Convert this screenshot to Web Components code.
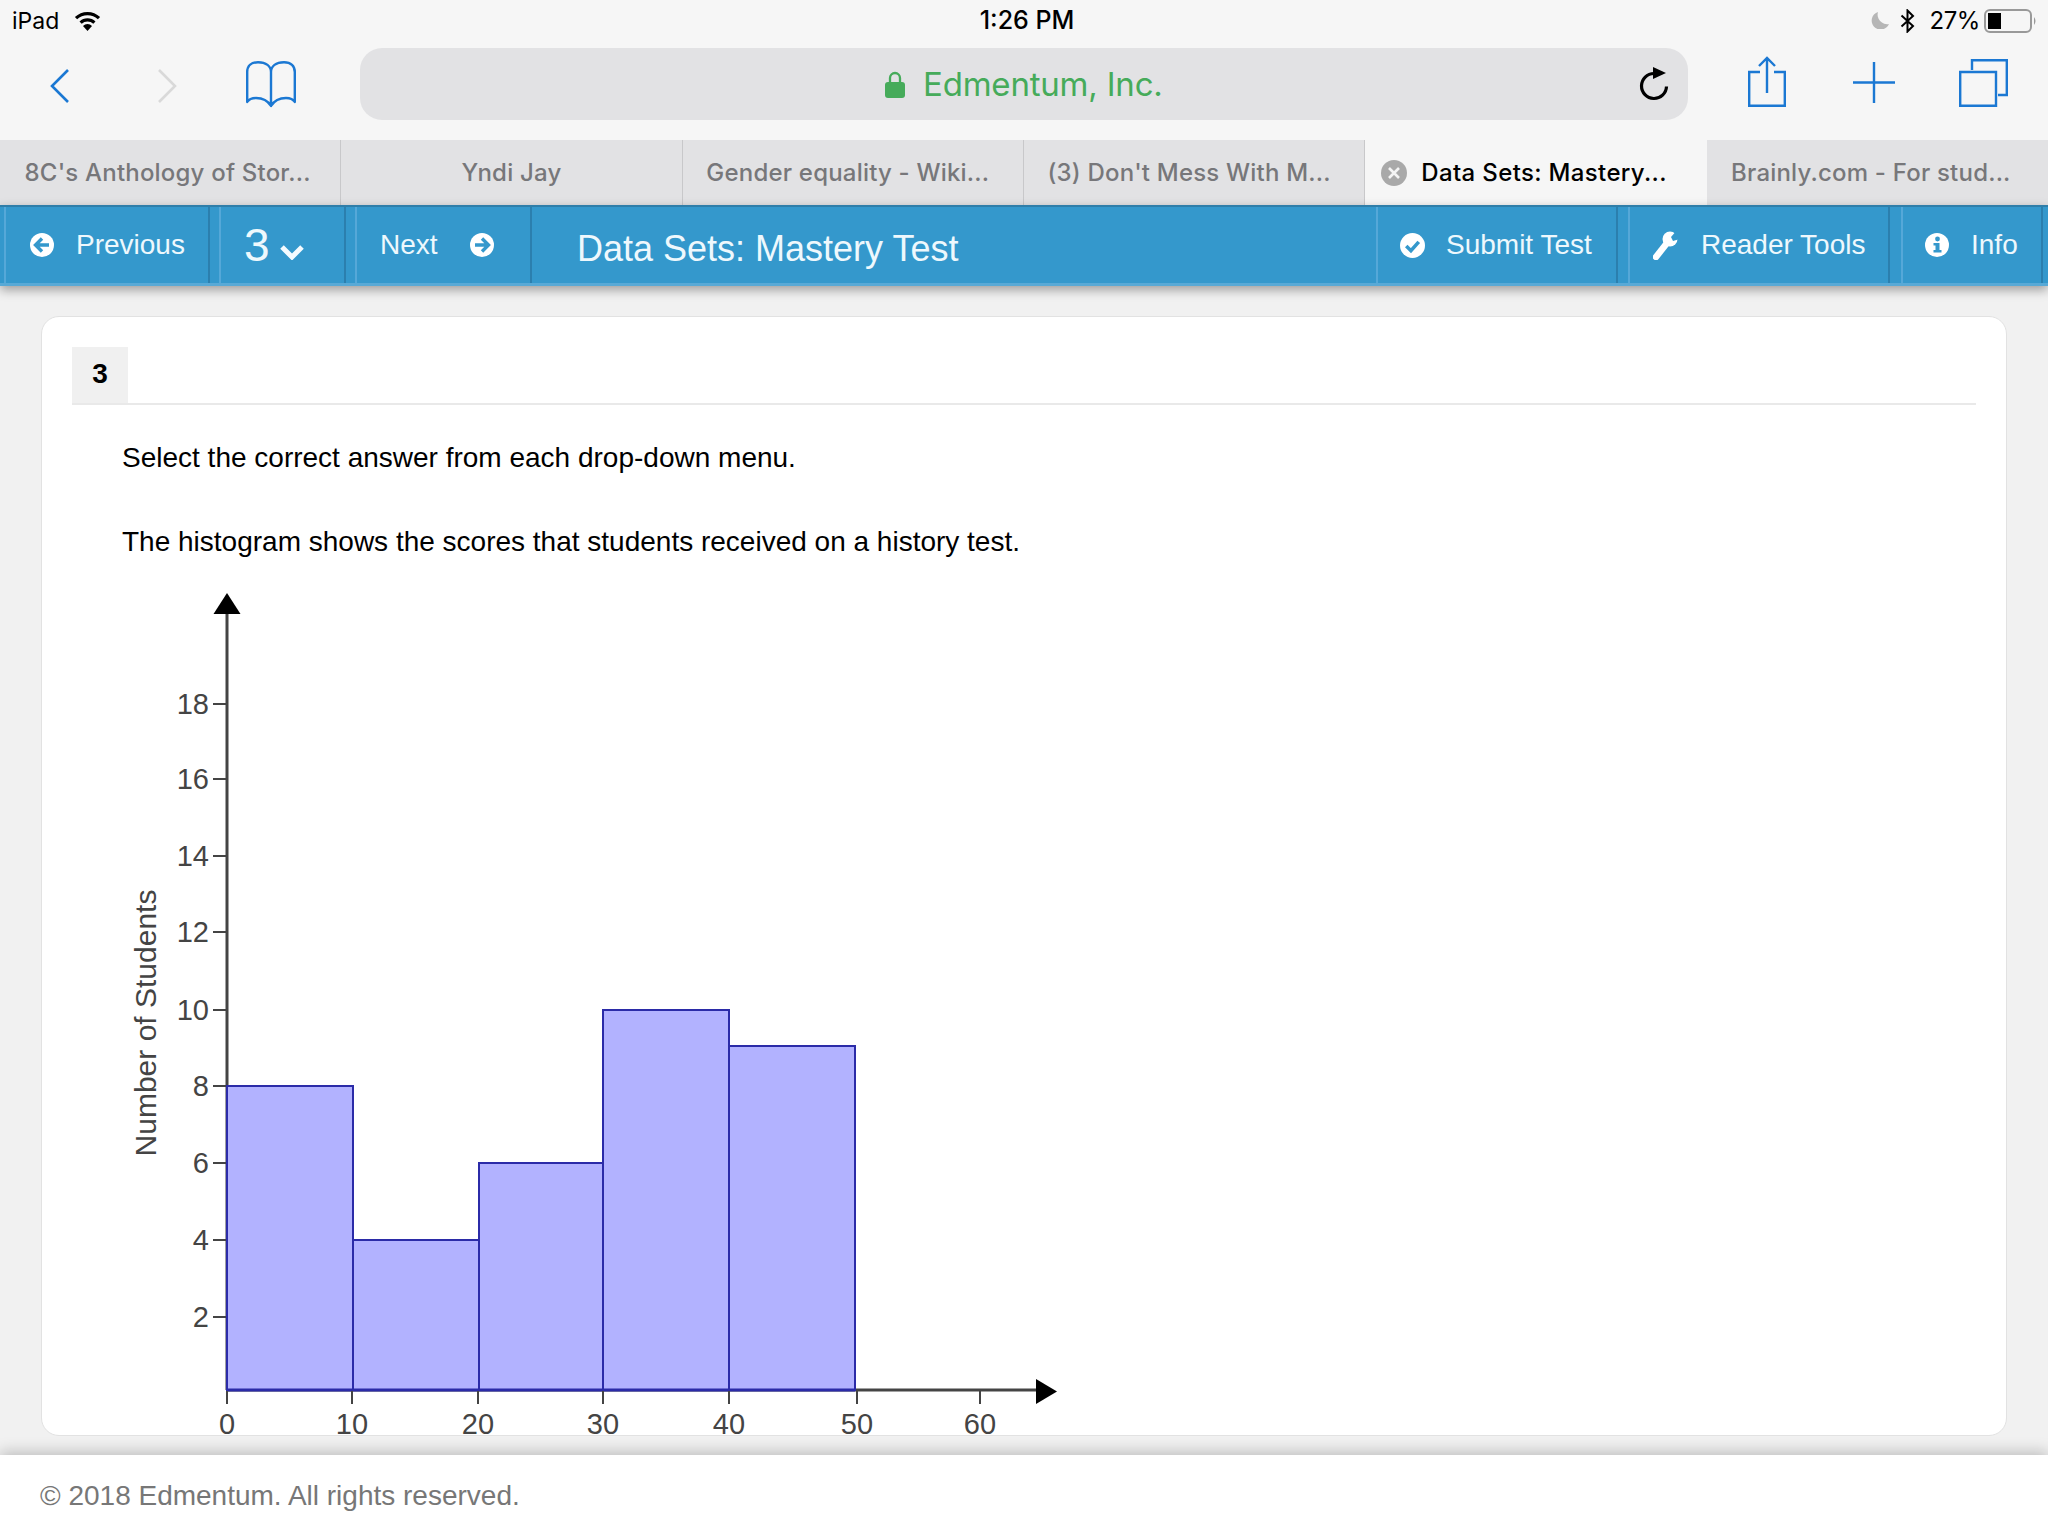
<!DOCTYPE html>
<html lang="en"><head><meta charset="utf-8"><title>Data Sets: Mastery Test</title>
<style>html,body{margin:0;padding:0;background:#f6f6f6}</style></head>
<body>
<quiz-app>
  <status-bar></status-bar>
  <browser-toolbar></browser-toolbar>
  <tab-strip>
    <browser-tab style="padding-right:5px">8C's Anthology of Stor...</browser-tab>
    <browser-tab>Yndi Jay</browser-tab>
    <browser-tab style="padding-right:10px">Gender equality - Wiki...</browser-tab>
    <browser-tab style="padding-right:10px">(3) Don't Mess With M...</browser-tab>
    <browser-tab active>Data Sets: Mastery...</browser-tab>
    <browser-tab style="padding-right:13px">Brainly.com - For stud...</browser-tab>
  </tab-strip>
  <quiz-bar></quiz-bar>
  <question-area>
    <question-card number="3">
      <p slot="body" class="a">Select the correct answer from each drop-down menu.</p>
      <p slot="body" class="b">The histogram shows the scores that students received on a history test.</p>
      <score-histogram slot="body"></score-histogram>
    </question-card>
  </question-area>
  <site-footer>© 2018 Edmentum. All rights reserved.</site-footer>
</quiz-app>
<script>
function def(name, html, init){
  const t=document.createElement('template'); t.innerHTML=html;
  customElements.define(name, class extends HTMLElement{
    constructor(){super();this.attachShadow({mode:'open'}).appendChild(t.content.cloneNode(true));}
    connectedCallback(){ if(init) init(this); }
  });
}
const BLUE='#1b78d3', BAR='#3498cc';
def('quiz-app',`<style>:host{display:flex;flex-direction:column;width:2048px;height:1536px;overflow:hidden;background:#f6f6f6}</style><slot></slot>`);

def('status-bar',`<style>
:host{display:grid;grid-template-columns:1fr auto 1fr;align-items:center;height:48px;box-sizing:border-box;padding:0 10px 7px 12px;font:400 24px Inter,"Liberation Sans",sans-serif;color:#000}
.l,.r{display:flex;align-items:center}.r{justify-content:flex-end}
.t{font-weight:500;font-size:25px;margin:0 0 2px 4px}svg{display:block}
</style>
<div class="l"><span style="font-size:23px">iPad</span>
<svg style="margin-left:15px" width="27" height="20" viewBox="0 0 27 20"><path d="M2 7.2A16.5 16.5 0 0 1 25 7.2M6.6 11.6A10 10 0 0 1 20.4 11.6" fill="none" stroke="#000" stroke-width="3.2"/><path d="M13.5 20L9 15A6.3 6.3 0 0 1 18 15Z"/></svg></div>
<div class="t">1:26 PM</div>
<div class="r">
<svg width="18" height="17" viewBox="0 0 18 17"><path d="M7 0A9 9 0 1 0 18 12A9.5 9.5 0 0 1 7 0Z" fill="#b6b6b6"/></svg>
<svg style="margin-left:11px" width="15" height="24" viewBox="0 0 15 24"><path d="M1.5 6.5L13 17L7.5 22.5V1.5L13 7L1.5 17.5" fill="none" stroke="#000" stroke-width="2"/></svg>
<span style="margin-left:14px;font-size:24px;letter-spacing:-.4px">27%</span>
<svg style="margin-left:4px" width="54" height="24" viewBox="0 0 54 24"><rect x="1" y="1" width="46" height="22" rx="5" fill="none" stroke="#999" stroke-width="2"/><rect x="4" y="4" width="13" height="16" fill="#000"/><path d="M50 8Q53 12 50 16Z" fill="#999"/></svg>
</div>`);

def('browser-toolbar',`<style>
:host{display:flex;height:92px;box-sizing:border-box;padding:0 0 20px 50px;align-items:flex-start;background:#f6f6f6}
svg{display:block;flex:none}
.url{flex:none;width:1328px;height:72px;margin-left:64px;border-radius:22px;background:#e2e2e4;display:flex;align-items:center;position:relative;box-sizing:border-box;padding-left:525px}
.host{margin-left:18px;font:400 33px Inter,"Liberation Sans",sans-serif;color:#46ab5a;letter-spacing:-.2px;line-height:40px}
</style>
<svg style="margin-top:21px" width="19" height="34" viewBox="0 0 19 34"><path d="M18 1L2 17L18 33" fill="none" stroke="${BLUE}" stroke-width="2.6"/></svg>
<svg style="margin:21px 0 0 89px" width="19" height="34" viewBox="0 0 19 34"><path d="M1 1L17 17L1 33" fill="none" stroke="#d9d9d9" stroke-width="2.6"/></svg>
<svg style="margin:13px 0 0 69px" width="50" height="47" viewBox="0 0 50 47"><path d="M25 45C22 40 16 37 10 37C6 37 3 38 1.2 41V11C1.2 5 5 1.2 12 1.2C20 1.2 25 5 25 11ZM25 45C28 40 34 37 40 37C44 37 47 38 48.800 41V11C48.800 5 45 1.2 38 1.2C30 1.2 25 5 25 11" fill="none" stroke="${BLUE}" stroke-width="2.4" stroke-linejoin="round"/></svg>
<div class="url">
<svg width="20" height="27" viewBox="0 0 20 27"><path d="M5 12V7A5 5 0 0 1 15 7V12" fill="none" stroke="#46ab5a" stroke-width="2.3"/><rect y="11" width="20" height="16" rx="3" fill="#46ab5a"/></svg>
<span class="host">Edmentum, Inc.</span>
<svg style="position:absolute;left:1279px;top:19px" width="30" height="34" viewBox="0 0 30 34"><path d="M15 6.500A12.500 12.500 0 1 0 27.500 19.500" fill="none" stroke="#000" stroke-width="3.200"/><path d="M14 0L27 6L14 12Z"/></svg>
</div>
<svg style="margin:8px 0 0 60px" width="38" height="51" viewBox="0 0 38 51"><path d="M12 16H1.200V49.800H36.800V16H26M19 37V2M11 10L19 2L27 10" fill="none" stroke="${BLUE}" stroke-width="2.400"/></svg>
<svg style="margin:14px 0 0 67px" width="42" height="41" viewBox="0 0 42 41"><path d="M0 20.500H42M21 0V41" stroke="${BLUE}" stroke-width="2.400"/></svg>
<svg style="margin:11px 0 0 64px" width="49" height="48" viewBox="0 0 49 48"><path d="M1.200 13H37V46.800H1.200ZM13 11V1.200H47.800V36H39" fill="none" stroke="${BLUE}" stroke-width="2.400"/></svg>`);

def('tab-strip',`<style>:host{display:grid;grid-template-columns:repeat(6,1fr);height:65px;background:#e2e2e4}</style><slot></slot>`);
def('browser-tab',`<style>
:host{min-width:0;box-sizing:border-box;display:flex;align-items:center;justify-content:center;border-right:1px solid #c8c8ca;font:500 24px Inter,"Liberation Sans",sans-serif;color:#77777a;letter-spacing:.2px;white-space:nowrap}
:host(:last-child){border-right:0}
:host([active]){background:#f6f6f6;color:#000;border-right:0;justify-content:flex-start;padding-left:16px;letter-spacing:.35px}
svg{display:none;flex:none;margin-right:14px}:host([active]) svg{display:block}
</style><svg width="26" height="26" viewBox="0 0 26 26"><circle cx="13" cy="13" r="13" fill="#a9a9a9"/><path d="M8 8L18 18M18 8L8 18" stroke="#f4f4f4" stroke-width="2.600"/></svg><span><slot></slot></span>`);

def('quiz-btn',`<style>
:host{display:flex;align-items:center;height:76px;box-sizing:border-box;border-left:2px solid #55a8d8;border-right:2px solid #2b7fae;font:400 28px "Liberation Sans",Arial,sans-serif;color:#eef8fd;white-space:nowrap}
::slotted(svg){display:block;flex:none}
</style><slot></slot>`);
def('quiz-bar',`<style>
:host{display:flex;position:relative;z-index:2;height:81px;box-sizing:border-box;background:${BAR};border-top:2px solid #2f7ea9;border-bottom:3px solid #58a9d6;box-shadow:0 4px 10px rgba(0,0,0,.35);padding-left:4px}
.title{font:400 36px "Liberation Sans",Arial,sans-serif;color:#eef8fd;margin-left:45px;align-self:center;position:relative;top:4px;white-space:nowrap}
.sp{flex:1}
quiz-btn{flex:none}
.num{font-size:46px;line-height:50px;font-weight:400}
</style>
<quiz-btn style="width:206px;padding-left:24px">
<svg width="24" height="24" viewBox="0 0 24 24"><circle cx="12" cy="12" r="12" fill="#fff"/><path d="M12 5.500L5.500 12L12 18.500M6 12H19" fill="none" stroke="${BAR}" stroke-width="3.400"/></svg><span style="margin-left:22px">Previous</span></quiz-btn>
<quiz-btn style="width:127px;margin-left:9px;padding-left:23px"><span class="num">3</span>
<svg style="margin:14px 0 0 9px" width="26" height="16" viewBox="0 0 26 16"><path d="M3 3L13 13L23 3" fill="none" stroke="#f4fbff" stroke-width="5"/></svg></quiz-btn>
<quiz-btn style="width:177px;margin-left:9px;padding-left:23px"><span>Next</span>
<svg style="margin-left:32px" width="24" height="24" viewBox="0 0 24 24"><circle cx="12" cy="12" r="12" fill="#fff"/><path d="M12 5.500L18.500 12L12 18.500M18 12H5" fill="none" stroke="${BAR}" stroke-width="3.400"/></svg></quiz-btn>
<div class="title">Data Sets: Mastery Test</div><div class="sp"></div>
<quiz-btn style="width:242px;padding-left:22px">
<svg width="25" height="25" viewBox="0 0 24 24"><circle cx="12" cy="12" r="12" fill="#fff"/><path d="M6 12.500L10.500 17L18 8.500" fill="none" stroke="${BAR}" stroke-width="3.400"/></svg><span style="margin-left:21px">Submit Test</span></quiz-btn>
<quiz-btn style="width:262px;margin-left:10px;padding-left:23px">
<svg width="25" height="30" viewBox="0 0 25 30"><path d="M3 27L14 13" stroke="#fff" stroke-width="6.500" stroke-linecap="round"/><circle cx="17" cy="9" r="7.500" fill="#fff"/><path d="M18 7L25 -1L30 8L20 11Z" fill="${BAR}"/></svg><span style="margin-left:23px">Reader Tools</span></quiz-btn>
<quiz-btn style="width:142px;margin-left:11px;margin-right:5px;padding-left:22px">
<svg width="24" height="24" viewBox="0 0 24 24"><circle cx="12" cy="12" r="12" fill="#fff"/><circle cx="12.500" cy="6" r="2.400" fill="${BAR}"/><path d="M8.500 10H14.500V17H16.500V19.500H8.500V17H10.500V12.500H8.500Z" fill="${BAR}"/></svg><span style="margin-left:22px">Info</span></quiz-btn>`);

def('question-area',`<style>:host{display:flex;flex:1;min-height:0;box-sizing:border-box;padding:30px 41px 19px;background:#f1f1f1}</style><slot></slot>`);
def('question-card',`<style>
:host{display:block;flex:1;box-sizing:border-box;background:#fff;border:1px solid #e2e2e2;border-radius:18px;padding:30px 30px 0}
.hd{display:flex;border-bottom:2px solid #e9e9e9}
.n{width:56px;height:56px;box-sizing:border-box;padding-bottom:2px;background:#f0f0f0;display:flex;align-items:center;justify-content:center;font:700 28px "Liberation Sans",Arial,sans-serif;color:#000}
::slotted(p){margin:0 0 0 50px;font:400 28px/34px "Liberation Sans",Arial,sans-serif;color:#000}
::slotted(p.a){margin-top:36px}
::slotted(p.b){margin-top:50px}
</style><div class="hd"><div class="n"></div></div><slot name="body"></slot>`,
 el=>{el.shadowRoot.querySelector('.n').textContent=el.getAttribute('number');});

const ticks=[[18,704],[16,779],[14,856],[12,932],[10,1010],[8,1086],[6,1163],[4,1240],[2,1317]];
const xs=[[0,227],[10,352],[20,478],[30,603],[40,729],[50,857],[60,980]];
const bars=[[227,353,1086],[353,479,1240],[479,603,1163],[603,729,1010],[729,855,1046]];
let ch='';
ch+=`<text x="0" y="0" transform="translate(156 1023) rotate(-90)" text-anchor="middle" font-size="30" fill="#444">Number of Students</text>`;
ticks.forEach(([v,y])=>{ch+=`<path d="M213 ${y}H227" stroke="#444" stroke-width="2"/><text x="209" y="${y+10}" text-anchor="end" font-size="29" fill="#444">${v}</text>`});
ch+=`<path d="M227 612V1390" stroke="#444" stroke-width="3"/><path d="M227 593L240.500 614H213.500Z" fill="#000"/>`;
ch+=`<path d="M227 1390H1040" stroke="#444" stroke-width="3"/><path d="M1057 1391.500L1036 1379V1404Z" fill="#000"/>`;
bars.forEach(([a,b,t])=>{ch+=`<rect x="${a}" y="${t}" width="${b-a}" height="${1390-t}" fill="#b2b2ff" stroke="#2b2ba8" stroke-width="2"/>`});
ch+=`<path d="M227 1390H855" stroke="#2b2ba8" stroke-width="3"/>`;
xs.forEach(([v,x])=>{ch+=`<path d="M${x} 1391V1404" stroke="#444" stroke-width="2"/><text x="${x}" y="1434" text-anchor="middle" font-size="29" fill="#444">${v}</text>`});
def('score-histogram',`<style>:host{display:block;margin:31px 0 0 48px;height:846px}svg{display:block;overflow:visible;font-family:"Liberation Sans",Arial,sans-serif}</style>
<svg width="1000" height="846" viewBox="120 590 1000 846">${ch}</svg>`);

def('site-footer',`<style>:host{display:flex;align-items:center;position:relative;z-index:2;height:81px;box-sizing:border-box;padding:0 0 0 40px;background:#fff;box-shadow:0 -3px 14px rgba(0,0,0,.22);font:400 28px "Liberation Sans",Arial,sans-serif;color:#777}</style><slot></slot>`);
</script>
</body></html>
